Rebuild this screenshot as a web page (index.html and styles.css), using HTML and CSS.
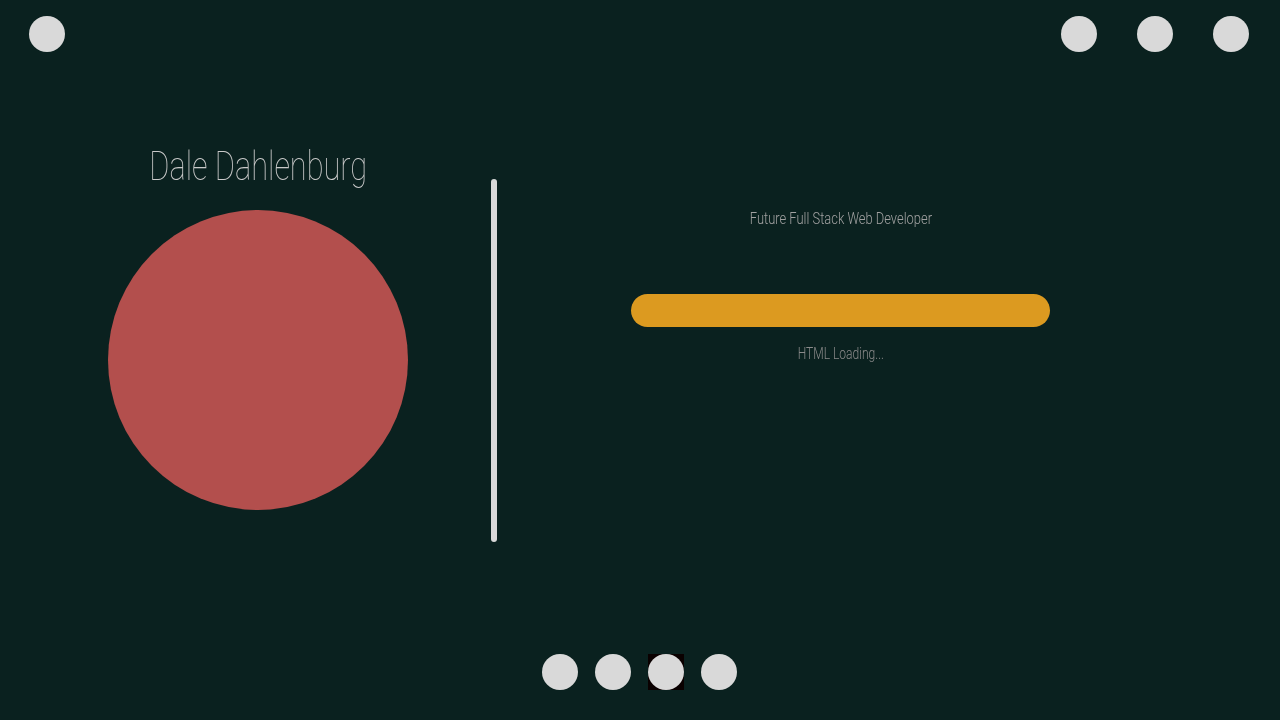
FILE: index.html
```html
<!DOCTYPE html>
<html lang="en">
<head>
<meta charset="utf-8">
<title>Dale Dahlenburg</title>
<link rel="stylesheet" href="styles.css">
</head>
<body>
<div class="page">
  <header class="topbar">
    <span class="dot"></span>
    <nav class="top-right">
      <span class="dot"></span>
      <span class="dot"></span>
      <span class="dot"></span>
    </nav>
  </header>
  <main class="main">
    <section class="profile">
      <h1 class="name"><span class="narrow">Dale Dahlenburg</span></h1>
      <div class="avatar"></div>
    </section>
    <div class="divider"></div>
    <section class="info">
      <p class="role"><span class="narrow">Future Full Stack Web Developer</span></p>
      <div class="bar"></div>
      <p class="loading"><span class="narrow">HTML Loading...</span></p>
    </section>
  </main>
  <footer class="pager">
    <span class="dot"></span>
    <span class="dot"></span>
    <span class="dot-box"><span class="dot"></span></span>
    <span class="dot"></span>
  </footer>
</div>
</body>
</html>
```
FILE: styles.css
```css
* { box-sizing: border-box; }
html, body { margin: 0; padding: 0; }
body {
  background: #0a211f;
  font-family: Roboto, "Liberation Sans", sans-serif;
  font-weight: 100;
}
.page {
  height: 720px;
  display: flex;
  flex-direction: column;
}
.topbar {
  display: flex;
  justify-content: space-between;
  padding: 16px 31px 0 29px;
}
.top-right { display: flex; gap: 40px; }
.dot {
  display: block;
  width: 36px;
  height: 36px;
  border-radius: 50%;
  background: #d9d9d9;
}
.main {
  display: flex;
  align-items: flex-start;
  margin-top: 88px;
}
.narrow {
  display: inline-block;
  white-space: nowrap;
  filter: grayscale(1);
}
.profile {
  margin-left: 108px;
  width: 300px;
  display: flex;
  flex-direction: column;
  align-items: center;
}
.name {
  margin: 0;
  font-size: 41px;
  line-height: 50px;
  font-weight: 100;
  color: #c3cbc9;
}
.name .narrow { transform: translateY(1px) scaleX(0.75); }
.avatar {
  margin-top: 20px;
  width: 300px;
  height: 300px;
  border-radius: 50%;
  background: #b34f4d;
}
.divider {
  margin-left: 83px;
  margin-top: 39px;
  width: 6px;
  height: 363px;
  border-radius: 3px;
  background: #d9d9d9;
}
.info {
  margin-left: 134px;
  width: 419px;
  display: flex;
  flex-direction: column;
  align-items: center;
  margin-top: 68px;
}
.role, .loading {
  margin: 0;
  font-size: 17px;
  line-height: 20px;
  font-weight: 300;
}
.role { color: #9aa3a1; }
.role .narrow { transform: scaleX(0.76); }
.bar {
  margin-top: 66px;
  width: 419px;
  height: 33px;
  border-radius: 17px;
  background: #dc9a20;
}
.loading {
  margin-top: 16px;
  color: #838c8a;
}
.loading .narrow { transform: scaleX(0.71); }
.pager {
  margin-top: auto;
  padding: 0 1px 30px 0;
  display: flex;
  justify-content: center;
  gap: 17px;
}
.dot-box {
  display: block;
  background: #0a0000;
}
```
